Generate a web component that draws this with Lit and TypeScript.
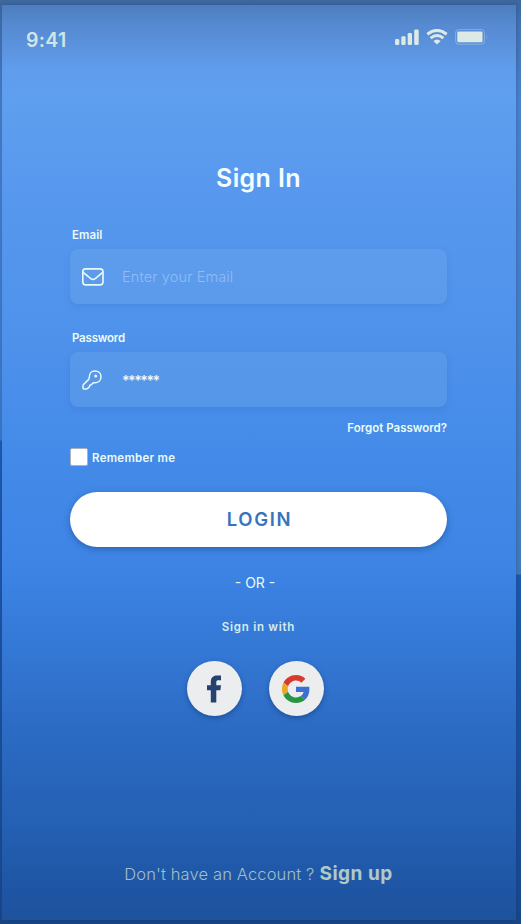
import { LitElement, html, css, svg } from "lit";
import { customElement } from "lit/decorators.js";

const signal = svg`<svg width="24" height="16" viewBox="0 0 24 16" fill="currentColor">
  <rect x="0" y="10" width="4.3" height="6" rx="1.3"/><rect x="6.3" y="7.2" width="4.3" height="8.8" rx="1.3"/>
  <rect x="12.7" y="4" width="4.3" height="12" rx="1.3"/><rect x="19.2" y="0.6" width="4.5" height="15.4" rx="1.3"/></svg>`;
const wifi = svg`<svg width="22" height="16" viewBox="0 0 22 16" fill="none" stroke="currentColor" stroke-width="3">
  <path d="M1.3 5.2Q11-2.4 20.7 5.2M4.600 9.200Q11 3.900 17.400 9.200"/>
  <path d="M11 15.600 7.300 12Q11 9 14.700 12Z" fill="currentColor" stroke="none"/></svg>`;
const battery = svg`<svg width="33" height="16" viewBox="0 0 33 16">
  <rect x=".6" y=".6" width="28.8" height="14.6" rx="3" fill="none" stroke="currentColor" stroke-opacity=".35"/>
  <rect x="2.3" y="2.5" width="25.2" height="10.8" rx="1.3" fill="currentColor"/>
  <path d="M31 5.4q1.8 2.5 0 5z" fill="currentColor" fill-opacity=".3"/></svg>`;
const mail = svg`<svg width="22" height="18" viewBox="0 0 22 18" fill="none" stroke="currentColor" stroke-width="1.6" stroke-linejoin="round">
  <rect x=".8" y=".9" width="20.2" height="16" rx="2.8"/><path d="M1.2 4.3 8.8 10.6Q11 12.2 13.2 10.6L20.7 4.3"/></svg>`;
const key = svg`<svg width="20" height="20" viewBox="0 0 20 20" fill="none" stroke="currentColor" stroke-width="1.5" stroke-linejoin="round">
  <path d="M7.3 7.2C7.300 3.500 9.500 1 12.800 1 16.600 1 19 3.500 19 6.800 19 10.200 16.500 12.800 13 12.800H11.800Q11 12.800 10.500 13.400L9.200 14.800 7.900 15.300 7.300 17 5.900 18.300Q5.200 19 4.300 19H2Q1 19 1 18V15.900Q1 15 1.700 14.300L6.500 9.600Q7.300 8.700 7.300 7.200Z"/>
  <circle cx="13.700" cy="6" r="1.500" fill="currentColor" stroke="none"/></svg>`;
const facebook = svg`<svg width="16" height="28" viewBox="0 0 16 28" fill="#28426f">
  <path d="M4.800 27.500V15.200H1V10.200H4.800V7C4.800 2.800 7 .5 11 .5H15V5.300H12.500C10.900 5.300 10.300 5.900 10.300 7.300V10.200H15L14.400 15.200H10.300V27.500Z"/></svg>`;
const google = svg`<svg width="28" height="28" viewBox="0 0 48 48">
  <path fill="#d93a30" d="M24 9.500c3.540 0 6.710 1.220 9.210 3.600l6.850-6.850C35.900 2.380 30.470 0 24 0 14.620 0 6.510 5.380 2.560 13.220l7.980 6.190C12.430 13.720 17.740 9.500 24 9.500z"/>
  <path fill="#3d70d0" d="M46.980 24.550c0-1.570-.15-3.090-.38-4.550H24v9.020h12.940c-.58 2.960-2.260 5.480-4.780 7.180l7.730 6c4.510-4.180 7.090-10.360 7.090-17.650z"/>
  <path fill="#e8aa22" d="M10.530 28.590c-.48-1.450-.76-2.990-.76-4.590s.27-3.140.76-4.590l-7.980-6.190C.92 16.460 0 20.120 0 24c0 3.880.92 7.540 2.560 10.780l7.970-6.190z"/>
  <path fill="#279541" d="M24 48c6.480 0 11.930-2.130 15.890-5.810l-7.730-6c-2.150 1.450-4.920 2.300-8.160 2.300-6.260 0-11.570-4.220-13.470-9.910l-7.980 6.190C6.510 42.620 14.620 48 24 48z"/></svg>`;

@customElement("app-root")
export class AppRoot extends LitElement {
  static styles = css`
    :host {
      display: block;
      box-sizing: border-box;
      width: 521px;
      height: 924px;
      padding: 5px 5px 4px 2px;
      background:
        linear-gradient(#3f689f 0 5px, #4271ad 20px, #4a82cc 100px, #3f7bcc 440px, #1f5bb2 441px, #19488b 910px, #194580 919px) 0 0 / 2px 100% no-repeat,
        linear-gradient(#3f689f 0 5px, #4271ad 20px, #4a82cc 100px, #4379bd 574px, #1c58ac 575px, #19488b 910px, #194580 919px);
      font-family: "Inter", "Liberation Sans", sans-serif;
      color: #e9fbf8;
      overflow: hidden;
    }
    svg { display: block; flex: none; }
    .screen {
      box-sizing: border-box;
      height: 915px;
      padding: 0 69px 0 68px;
      display: flex;
      flex-direction: column;
      background: linear-gradient(#4d7dbe 0, #568ad1 20px, #5c94df 45px, #5f9cec 62px, #5f9fef 90px, #5798ee 190px, #5093ec 310px, #468ce9 420px, #3d84e5 560px, #3478d5 645px, #2c6bc4 725px, #2460b3 820px, #1f56a5 880px, #1d529c 915px);
      box-shadow: 0 0 4px #173a7066;
    }
    .status {
      display: flex;
      align-items: flex-start;
      margin: 0 -42px 0 -44px;
      height: 161px;
      color: #dde9e4;
    }
    .time { flex: 1; padding-top: 23px; font-size: 19.500px; line-height: 24px; font-weight: 600; color: #cfe6e4; letter-spacing: 0.3px; }
    .icons { display: flex; gap: 7px; padding: 24px 1px 0 0; }
    h1 { margin: 0; height: 63px; font-size: 25px; line-height: 24px; font-weight: 600; text-align: center; letter-spacing: 0.4px; color: #f3fffe; }
    label { display: block; height: 20px; padding-left: 2px; font-size: 11.500px; line-height: 12px; font-weight: 600; letter-spacing: .1px; }
    label.pw { letter-spacing: -.2px; }
    .field {
      box-sizing: border-box;
      height: 55px;
      display: flex;
      align-items: center;
      padding-left: 12px;
      border-radius: 8px;
      background: #78aee848;
      box-shadow: 0 2px 6px #2462b830;
    }
    .email { margin-bottom: 28px; }
    .slot { width: 40px; }
    .hint { font-size: 14.500px; font-weight: 300; letter-spacing: .13px; color: #91bdf4; }
    .secret { font-size: 14px; font-weight: 600; padding-top: 2px; letter-spacing: -1.450px; }
    .forgot { height: 27px; padding-top: 14px; box-sizing: border-box; font-size: 11.500px; line-height: 14px; font-weight: 600; text-align: right; }
    .remember { display: flex; align-items: center; gap: 4px; margin-top: 14px; height: 18px; font-size: 11.500px; font-weight: 600; letter-spacing: .28px; }
    .remember span:last-child { padding-top: 1px; }
    .box { box-sizing: border-box; width: 18px; height: 18px; border: 1px solid #a9b4bd; border-radius: 2px; background: #fff; }
    .login {
      flex: none;
      margin: 26px 0 0;
      padding: 0 0 0 2px;
      height: 55px;
      border: 0;
      border-radius: 28px;
      background: #fff;
      box-shadow: 0 2px 6px #1b4a8c90;
      font: 600 18.500px/55px "Inter", sans-serif;
      letter-spacing: 1.700px;
      color: #3674bd;
    }
    .or { margin: 27px 0 0; height: 18px; font-size: 14px; line-height: 18px; text-align: center; padding-right: 7px; }
    .with { margin-top: 28px; height: 14px; font-size: 11.500px; line-height: 14px; font-weight: 600; letter-spacing: .75px; text-align: center; color: #d5ebee; }
    .social { display: flex; justify-content: center; gap: 27px; margin-top: 27px; padding-right: 7px; }
    .round { width: 55px; height: 55px; border-radius: 50%; display: flex; align-items: center; justify-content: center; background: #ebedee; box-shadow: 0 2px 5px #123a7590; }
    .signup { display: flex; align-items: baseline; justify-content: center; gap: 5px; margin-top: 146px; line-height: 24px; font-size: 16.500px; font-weight: 350; letter-spacing: .13px; color: #a2bfc7; white-space: nowrap; }
    .signup b { font-size: 19px; font-weight: 700; letter-spacing: .5px; color: #b1c9c7; }
  `;

  render() {
    return html`<main class="screen">
      <header class="status"><span class="time">9:41</span><span class="icons">${signal}${wifi}${battery}</span></header>
      <h1>Sign In</h1>
      <label>Email</label>
      <div class="field email"><span class="slot">${mail}</span><span class="hint">Enter your Email</span></div>
      <label class="pw">Password</label>
      <div class="field"><span class="slot">${key}</span><span class="secret">******</span></div>
      <div class="forgot">Forgot Password?</div>
      <div class="remember"><span class="box"></span><span>Remember me</span></div>
      <button class="login">LOGIN</button>
      <div class="or">- OR -</div>
      <div class="with">Sign in with</div>
      <div class="social"><span class="round">${facebook}</span><span class="round">${google}</span></div>
      <footer class="signup"><span>Don't have an Account ?</span><b>Sign up</b></footer>
    </main>`;
  }
}
